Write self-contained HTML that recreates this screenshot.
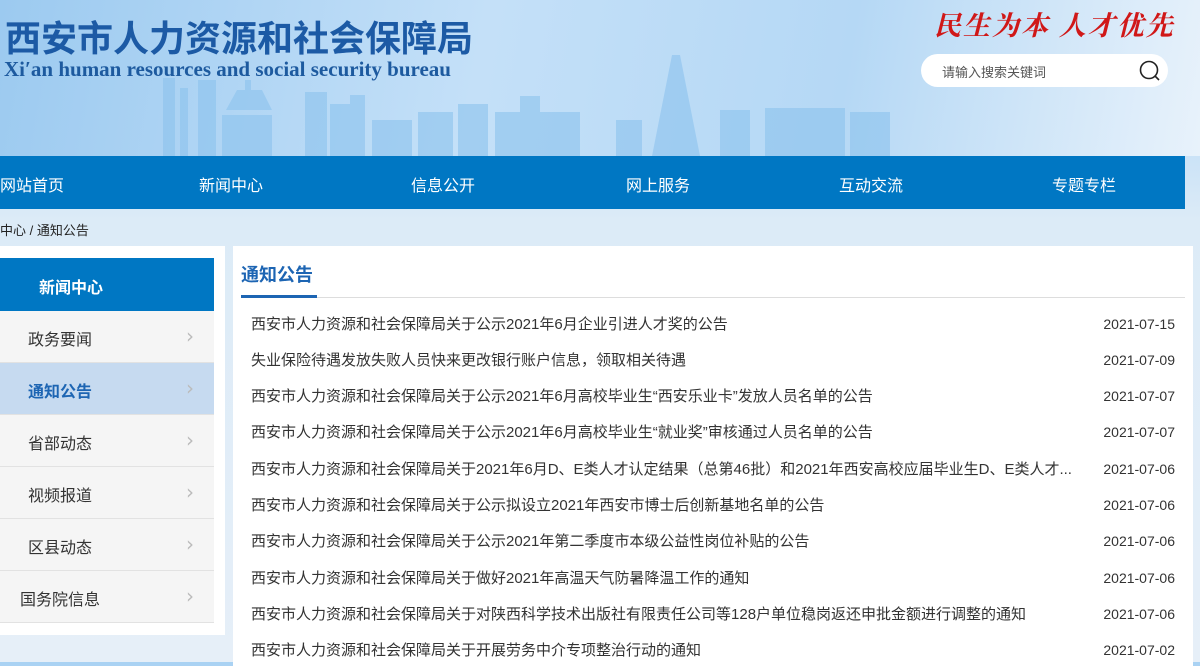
<!DOCTYPE html>
<html><head><meta charset="utf-8"><style>
*{margin:0;padding:0;box-sizing:border-box}
body{width:1200px;height:662px;overflow:hidden;font-family:"Liberation Sans","Noto Sans CJK SC",sans-serif;background:linear-gradient(180deg,#a9d2f3 0px,#c9e2f7 150px,#dcebf7 220px,#e6eff8 662px);position:relative}
.hdr{position:absolute;left:0;top:0;width:1200px;height:156px;background:linear-gradient(100deg,#9ccaf0 0%,#c4e0f8 40%,#b5d8f5 70%,#e8f2fb 100%)}
.t1{position:absolute;left:5px;top:10px;font-size:36px;font-weight:bold;color:#1c5aa5;white-space:nowrap}
.t2{position:absolute;left:4px;top:57px;font-family:"Liberation Serif",serif;font-weight:bold;font-size:21px;color:#1d5a9f;white-space:nowrap}
.slogan{position:absolute;left:934px;top:4px;font-family:"Liberation Serif","Noto Serif CJK SC",serif;font-weight:bold;font-size:27px;color:#d01818;letter-spacing:2px;font-style:italic;white-space:nowrap}
.search{position:absolute;left:921px;top:54px;width:247px;height:33px;background:#fff;border-radius:17px}
.search span{position:absolute;left:21px;top:8px;font-size:13px;color:#555}
.nav{position:absolute;left:0;top:156px;width:1185px;height:53px;background:#0077c3}
.nav span{position:absolute;top:16px;font-size:16px;color:#fff;white-space:nowrap}
.bc{position:absolute;left:0;top:220px;font-size:13px;color:#222}
.side{position:absolute;left:0;top:246px;width:225px;height:389px;background:#fff}
.sh{position:absolute;left:0;top:12px;width:214px;height:53px;background:#0077c3;color:#fff;font-weight:bold;font-size:16px;padding:16px 0 0 39px}
.si{position:absolute;left:0;width:214px;height:52px;background:#f5f5f5;border-bottom:1px solid #e2e2e2;font-size:16px;color:#333}
.si b{position:absolute;left:28px;top:15px;font-weight:normal}
.si i{position:absolute;left:186px;top:13px;font-style:normal;color:#bbb;font-size:20px;font-family:"DejaVu Sans",sans-serif}
.si.on{background:#c6daf0}
.si.on b{color:#1d65b3;font-weight:bold}
.main{position:absolute;left:233px;top:246px;width:960px;height:420px;background:#fff}
.mt{position:absolute;left:8px;top:15px;font-size:18px;font-weight:bold;color:#1d65b3}
.ml{position:absolute;left:8px;top:51px;width:944px;height:1px;background:#ddd}
.mu{position:absolute;left:8px;top:49px;width:76px;height:3px;background:#1d65b3}
.row{position:absolute;left:18px;width:924px;font-size:15px;color:#333;white-space:nowrap}
.row span{position:absolute;right:0;top:3px;font-size:14px}
</style></head><body>
<div class="hdr">
<svg width="1200" height="156" style="position:absolute;left:0;top:0">
<g fill="#8cc3ee" opacity="0.6">
<rect x="163" y="78" width="12" height="78"/><rect x="180" y="88" width="8" height="68"/><rect x="198" y="80" width="18" height="76"/>
<rect x="222" y="115" width="50" height="41"/><polygon points="237,90 262,90 272,110 226,110"/><rect x="245" y="80" width="6" height="12"/>
<rect x="305" y="92" width="22" height="64"/><rect x="330" y="104" width="20" height="52"/><rect x="350" y="95" width="15" height="61"/><rect x="372" y="120" width="40" height="36"/><rect x="418" y="112" width="35" height="44"/><rect x="458" y="104" width="30" height="52"/><rect x="495" y="112" width="30" height="44"/><rect x="520" y="96" width="20" height="60"/><rect x="540" y="112" width="40" height="44"/>
<rect x="616" y="120" width="26" height="36"/><polygon points="672,55 680,55 700,156 652,156"/><rect x="720" y="110" width="30" height="46"/><rect x="765" y="108" width="80" height="48"/><rect x="850" y="112" width="40" height="44"/>
</g></svg>
<div class="t1">西安市人力资源和社会保障局</div>
<div class="t2">Xi′an human resources and social security bureau</div>
<div class="slogan">民生为本 人才优先</div>
<div class="search"><span>请输入搜索关键词</span>
<svg width="26" height="26" style="position:absolute;left:216px;top:4px"><circle cx="12" cy="12" r="8.5" fill="none" stroke="#222" stroke-width="1.6"/><line x1="18" y1="18" x2="22" y2="22" stroke="#222" stroke-width="1.6"/></svg></div>
</div>
<div class="nav"><span style="left:0">网站首页</span><span style="left:199px">新闻中心</span><span style="left:411px">信息公开</span><span style="left:626px">网上服务</span><span style="left:839px">互动交流</span><span style="left:1052px">专题专栏</span></div>
<div class="bc">中心 / 通知公告</div>
<div class="side">
<div class="sh">新闻中心</div>
<div class="si" style="top:65px"><b>政务要闻</b><i>›</i></div>
<div class="si on" style="top:117px"><b>通知公告</b><i>›</i></div>
<div class="si" style="top:169px"><b>省部动态</b><i>›</i></div>
<div class="si" style="top:221px"><b>视频报道</b><i>›</i></div>
<div class="si" style="top:273px"><b>区县动态</b><i>›</i></div>
<div class="si" style="top:325px"><b style="left:20px">国务院信息</b><i>›</i></div>
</div>
<div class="main">
<div class="mt">通知公告</div><div class="ml"></div><div class="mu"></div>
<div class="row" style="top:67px">西安市人力资源和社会保障局关于公示2021年6月企业引进人才奖的公告<span>2021-07-15</span></div>
<div class="row" style="top:103px">失业保险待遇发放失败人员快来更改银行账户信息，领取相关待遇<span>2021-07-09</span></div>
<div class="row" style="top:139px">西安市人力资源和社会保障局关于公示2021年6月高校毕业生“西安乐业卡”发放人员名单的公告<span>2021-07-07</span></div>
<div class="row" style="top:175px">西安市人力资源和社会保障局关于公示2021年6月高校毕业生“就业奖”审核通过人员名单的公告<span>2021-07-07</span></div>
<div class="row" style="top:212px">西安市人力资源和社会保障局关于2021年6月D、E类人才认定结果（总第46批）和2021年西安高校应届毕业生D、E类人才...<span style="background:#fff;padding-left:8px">2021-07-06</span></div>
<div class="row" style="top:248px">西安市人力资源和社会保障局关于公示拟设立2021年西安市博士后创新基地名单的公告<span>2021-07-06</span></div>
<div class="row" style="top:284px">西安市人力资源和社会保障局关于公示2021年第二季度市本级公益性岗位补贴的公告<span>2021-07-06</span></div>
<div class="row" style="top:321px">西安市人力资源和社会保障局关于做好2021年高温天气防暑降温工作的通知<span>2021-07-06</span></div>
<div class="row" style="top:357px">西安市人力资源和社会保障局关于对陕西科学技术出版社有限责任公司等128户单位稳岗返还申批金额进行调整的通知<span>2021-07-06</span></div>
<div class="row" style="top:393px">西安市人力资源和社会保障局关于开展劳务中介专项整治行动的通知<span>2021-07-02</span></div>
</div>
</body></html>
